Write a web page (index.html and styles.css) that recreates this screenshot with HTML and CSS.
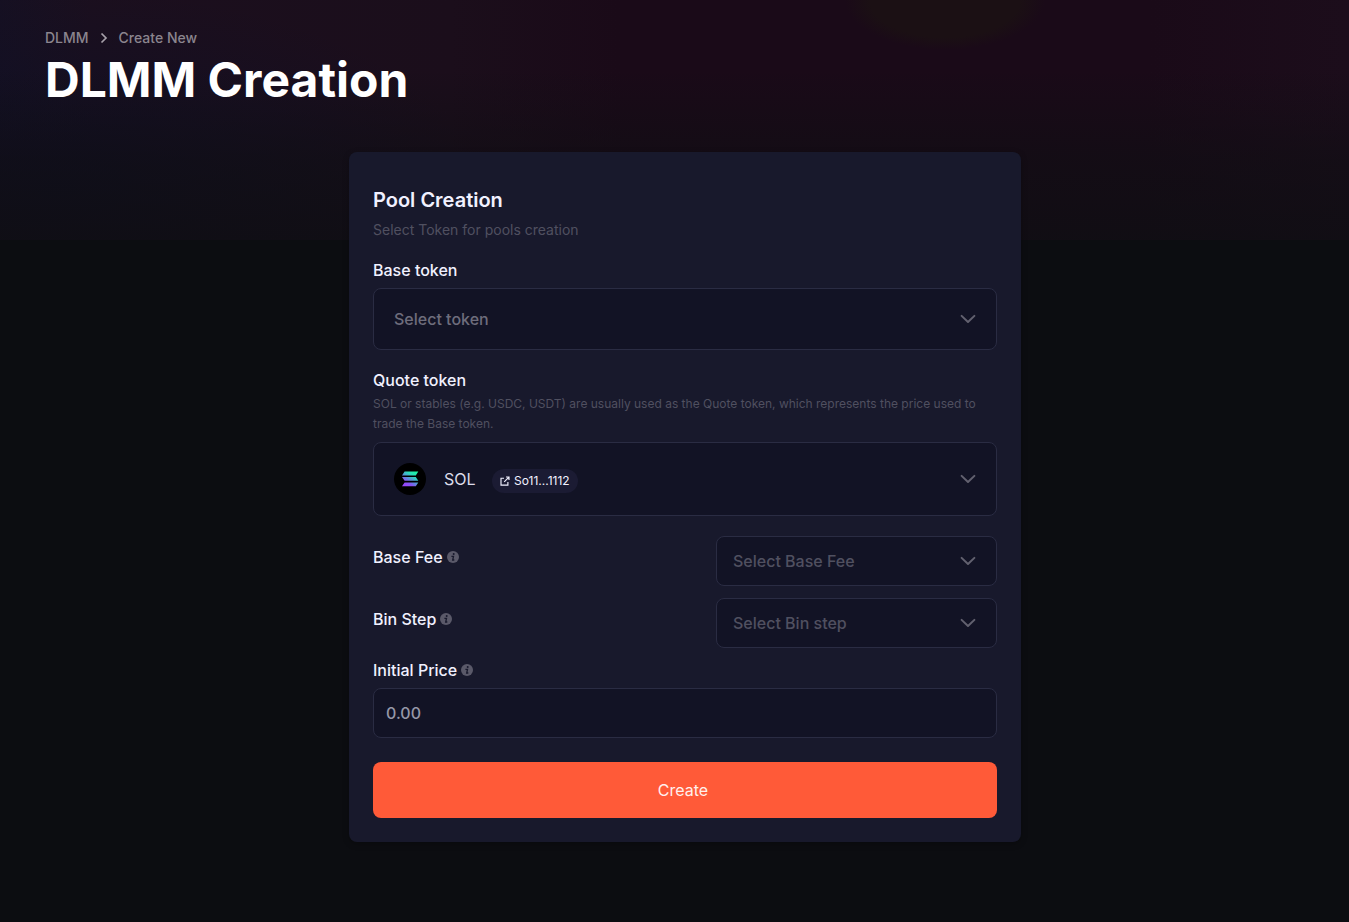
FILE: index.html
```
<!DOCTYPE html>
<html lang="en">
<head>
<meta charset="utf-8">
<title>DLMM Creation</title>
<link rel="stylesheet" href="styles.css">
</head>
<body>
<svg class="symbols" width="0" height="0" aria-hidden="true">
  <symbol id="chevron" viewBox="0 0 16 10"><path d="M1.6 1.9 8 8l6.4-6.1" fill="none" stroke="currentColor" stroke-width="2" stroke-linecap="round" stroke-linejoin="round"/></symbol>
  <symbol id="info" viewBox="0 0 12 12"><circle cx="6" cy="6" r="6" fill="currentColor"/><circle cx="6.7" cy="3.1" r="1" fill="#18192c"/><path d="M4.4 5.3h2.1L5.7 9h1.6" fill="none" stroke="#18192c" stroke-width="1.3"/></symbol>
</svg>
<div class="page">
  <header class="hero">
    <nav class="breadcrumb">
      <span>DLMM</span>
      <svg class="crumb-arrow" viewBox="0 0 8 12"><path d="M1.5 1.5 6 6l-4.5 4.5" fill="none" stroke="currentColor" stroke-width="1.7"/></svg>
      <span>Create New</span>
    </nav>
    <h1 class="title">DLMM Creation</h1>
  </header>
  <main class="card">
    <h2 class="card-title">Pool Creation</h2>
    <p class="card-subtitle">Select Token for pools creation</p>

    <div class="label">Base token</div>
    <div class="select select-base"><span class="placeholder">Select token</span><svg class="chevron"><use href="#chevron"/></svg></div>

    <div class="label label-quote">Quote token</div>
    <p class="hint">SOL or stables (e.g. USDC, USDT) are usually used as the Quote token, which represents the price used to trade the Base token.</p>
    <div class="select select-quote">
      <svg class="token-logo" viewBox="0 0 32 32">
        <defs><linearGradient id="sol" x1="10" y1="25" x2="22" y2="7" gradientUnits="userSpaceOnUse"><stop offset="0.08" stop-color="#9945ff"/><stop offset="0.3" stop-color="#8752f3"/><stop offset="0.5" stop-color="#5497d5"/><stop offset="0.72" stop-color="#28e0b9"/><stop offset="1" stop-color="#19fb9b"/></linearGradient></defs>
        <circle cx="16" cy="16" r="16"/>
        <path fill="url(#sol)" d="M10.6 8.6h13.7l-2.5 3.8H8ZM8 14.1h13.8l2.5 3.7H10.6ZM10.6 19.5h13.7l-2.5 3.8H8Z"/>
      </svg>
      <span class="token-name">SOL</span>
      <span class="address">
        <svg class="external" viewBox="0 0 10 10"><path d="M4 2.2H1v6.9h6.9V6M6 1h3v3M8.9 1.1 4.2 5.8" fill="none" stroke="currentColor" stroke-width="1.15"/></svg>
        <span>So11...1112</span>
      </span>
      <svg class="chevron"><use href="#chevron"/></svg>
    </div>

    <div class="field-row">
      <div class="label">Base Fee<svg class="info"><use href="#info"/></svg></div>
      <div class="select select-small"><span class="placeholder dim">Select Base Fee</span><svg class="chevron"><use href="#chevron"/></svg></div>
    </div>
    <div class="field-row">
      <div class="label">Bin Step<svg class="info"><use href="#info"/></svg></div>
      <div class="select select-small"><span class="placeholder dim">Select Bin step</span><svg class="chevron"><use href="#chevron"/></svg></div>
    </div>

    <div class="label label-price">Initial Price<svg class="info"><use href="#info"/></svg></div>
    <input class="price" type="text" placeholder="0.00">
    <button class="create">Create</button>
  </main>
</div>
</body>
</html>
```
FILE: styles.css
```
* { box-sizing: border-box; }
body { margin: 0; background: #0c0d11; color: #f1f1ff; font: 400 16px/24px Inter, "Liberation Sans", sans-serif; }
h1, h2, p { margin: 0; }
svg { display: block; flex: none; }
.symbols { position: absolute; }
.page {
  min-height: 922px;
  background:
    linear-gradient(180deg, rgba(15,14,19,0) 0, rgba(15,14,19,0) 70px, rgba(15,14,19,.6) 160px, rgba(15,14,19,.85) 240px) 0 0 / 100% 240px no-repeat,
    radial-gradient(ellipse 420px 200px at 60px 190px, #100f24 0, rgba(16,15,32,0) 100%) 0 0 / 100% 240px no-repeat,
    radial-gradient(ellipse 100px 50px at 945px 0, #1b1014 0, #1b1014 75%, rgba(27,16,20,0) 100%) 0 0 / 100% 240px no-repeat,
    linear-gradient(90deg, #161022 0, #1b0f1e 90px, #1b0e1b 450px, #1a0a18 620px, #1a0a18 1150px, #1c0d1b 1349px) 0 0 / 100% 240px no-repeat;
}
.hero { height: 152px; padding: 28px 45px 0; }
.breadcrumb { display: flex; align-items: center; height: 20px; font-size: 14px; line-height: 20px; font-weight: 500; color: #8b858e; }
.crumb-arrow { width: 8px; height: 12px; margin: 0 11px; color: #a7a1aa; }
.title { margin-top: 2px; font-size: 48px; line-height: 60px; font-weight: 700; color: #fff; }
.card { width: 672px; height: 690px; margin-left: 349px; padding: 34px 24px 24px; border-radius: 8px; background: #18192c; box-shadow: 0 2px 6px rgba(0,0,0,.25); }
.card-title { font-size: 20px; line-height: 28px; font-weight: 600; }
.card-subtitle { margin: 6px 0 18px; font-size: 14px; line-height: 20px; color: #505060; }
.label { display: flex; align-items: center; height: 24px; font-weight: 500; }
.label-quote { margin-top: 18px; }
.hint { margin-top: 2px; font-size: 12px; line-height: 20px; color: #505060; }
.select { display: flex; align-items: center; border: 1px solid #2a2c43; border-radius: 8px; background: #121325; padding: 0 20px; }
.select-base { height: 62px; margin-top: 6px; }
.select-quote { height: 74px; margin: 8px 0 20px; }
.select-small { width: 281px; height: 50px; padding-left: 16px; }
.placeholder { font-weight: 500; color: #6e6d7c; }
.dim { color: #505060; }
.chevron { width: 16px; height: 10px; margin-left: auto; color: #62616f; }
.token-logo { width: 32px; height: 32px; margin-right: 18px; }
.token-name { color: #dcdceb; }
.address { display: flex; align-items: center; gap: 4.5px; height: 24px; margin: 4px 0 0 16px; padding: 0 8px; border-radius: 12px; background: #1b1b33; font-size: 12px; line-height: 16px; }
.external { width: 10px; height: 10px; }
.field-row { display: flex; justify-content: space-between; margin-bottom: 12px; }
.field-row .label { margin-top: 9px; }
.label-price { margin-top: -2px; }
.info { width: 12px; height: 12px; margin-left: 4px; color: #5a5969; }
.price { display: block; width: 100%; height: 50px; margin: 6px 0 24px; padding: 0 12px; border: 1px solid #2a2c43; border-radius: 8px; background: #121325; color: #fff; font: inherit; font-weight: 500; }
.price::placeholder { color: #9698a8; opacity: 1; }
.create { display: block; width: 100%; height: 56px; padding: 0 4px 0 0; border: 0; border-radius: 8px; background: #ff5a38; color: #fff0ed; font: inherit; }
```
